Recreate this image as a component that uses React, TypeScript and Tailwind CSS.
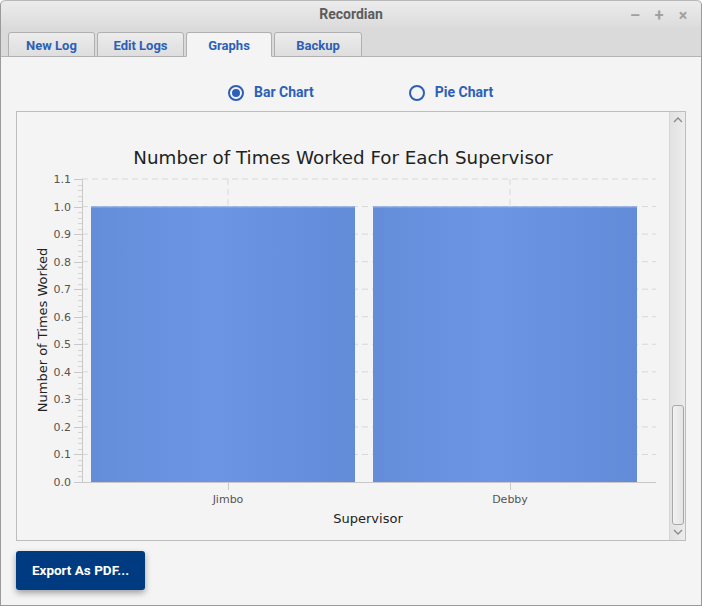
export default function App() {
  const ticks = [0, 0.1, 0.2, 0.3, 0.4, 0.5, 0.6, 0.7, 0.8, 0.9, 1.0, 1.1]
  const y = (v: number) => 370 - v * (303 / 1.1)
  const minors: number[] = []
  for (let i = 0; i < 55; i++) if (i % 5 !== 0) minors.push(i * 0.02)

  const tabs = ['New Log', 'Edit Logs', 'Graphs', 'Backup']
  const tabWidths = ['w-[87px]', 'w-[87px]', 'w-[86px]', 'w-[88px]']

  return (
    <div className="w-[702px] h-[606px] flex flex-col bg-[#f4f4f4] border border-t-0 border-[#9a9a9a] rounded-t-[5px] overflow-hidden" style={{ fontFamily: 'Roboto, "Liberation Sans", sans-serif' }}>
      {/* title bar */}
      <div className="h-[27px] relative flex items-center justify-center bg-gradient-to-b from-[#ececec] to-[#dcdcdc] border-t border-[#b8b8b8] rounded-t-[5px]">
        <span className="text-[14px] font-bold text-[#5c5c5c]">Recordian</span>
        <div className="absolute right-[12px] top-[3px] flex items-center gap-[12px] text-[#a0a0a0] text-[16px] font-bold">
          <span className="w-[12px] text-center">–</span>
          <span className="w-[12px] text-center">+</span>
          <span className="w-[12px] text-center">×</span>
        </div>
      </div>

      {/* tab strip */}
      <div className="h-[30px] bg-[#dadada] flex items-end pl-[7px] gap-[2px] border-b border-[#b4b4b4]">
        {tabs.map((t, i) => (
          <div
            key={t}
            className={`${tabWidths[i]} h-[25px] -mb-px flex items-center justify-center pt-[2px] text-[13px] font-bold text-[#2d5fb7] border border-[#b0b0b0] rounded-t-[3px] ${
              t === 'Graphs' ? 'bg-[#f4f4f4] border-b-[#f4f4f4]' : 'bg-gradient-to-b from-[#ececec] to-[#dedede]'
            }`}
          >
            {t}
          </div>
        ))}
      </div>

      {/* content */}
      <div className="flex-1 flex flex-col px-[15px]">
        <div className="h-[54px] flex items-center pl-[212px] gap-[95px] pt-[17px]">
          <div className="flex items-center gap-[10px]">
            <span className="w-[16px] h-[16px] rounded-full border-2 border-[#2d5fb7] flex items-center justify-center">
              <span className="w-[8px] h-[8px] rounded-full bg-[#2d5fb7]" />
            </span>
            <span className="text-[14px] font-bold text-[#2d5fb7]">Bar Chart</span>
          </div>
          <div className="flex items-center gap-[10px]">
            <span className="w-[16px] h-[16px] rounded-full border-2 border-[#2d5fb7]" />
            <span className="text-[14px] font-bold text-[#2d5fb7]">Pie Chart</span>
          </div>
        </div>

        {/* scroll pane */}
        <div className="h-[430px] flex border border-[#bdbdbd] bg-[#f4f4f4]">
          <div className="flex-1">
            <svg width="651" height="428" style={{ fontFamily: '"DejaVu Sans", sans-serif' }}>
              <defs>
                <linearGradient id="bar" x1="0" x2="1" y1="0" y2="0">
                  <stop offset="0" stopColor="#648dd9" />
                  <stop offset="0.45" stopColor="#6c96e4" />
                  <stop offset="1" stopColor="#628bd8" />
                </linearGradient>
              </defs>
              <text x="326" y="52" textAnchor="middle" fontSize="18.3" fill="#222">
                Number of Times Worked For Each Supervisor
              </text>

              {/* gridlines */}
              {ticks.slice(1).map((v) => (
                <line key={v} x1="65" x2="639" y1={y(v)} y2={y(v)} stroke="#d8d8d8" strokeDasharray="6 4" />
              ))}
              <line x1="211" x2="211" y1="67" y2="370" stroke="#d8d8d8" strokeDasharray="6 4" />
              <line x1="493" x2="493" y1="67" y2="370" stroke="#d8d8d8" strokeDasharray="6 4" />

              {/* bars */}
              <rect x="74" y={y(1)} width="264" height={370 - y(1)} fill="url(#bar)" />
              <rect x="356" y={y(1)} width="264" height={370 - y(1)} fill="url(#bar)" />
              <line x1="74" x2="338" y1={y(1) + 0.5} y2={y(1) + 0.5} stroke="#8eaee9" />
              <line x1="356" x2="620" y1={y(1) + 0.5} y2={y(1) + 0.5} stroke="#8eaee9" />

              {/* y axis */}
              <line x1="65.5" x2="65.5" y1="67" y2="370" stroke="#c8c8c8" />
              {ticks.map((v) => (
                <g key={v}>
                  <line x1="57" x2="65" y1={Math.round(y(v)) + 0.5} y2={Math.round(y(v)) + 0.5} stroke="#c8c8c8" />
                  <text x="54" y={y(v) + 4} textAnchor="end" fontSize="11" fill="#555">
                    {v.toFixed(1)}
                  </text>
                </g>
              ))}
              {minors.map((v) => (
                <line key={v} x1="61" x2="65" y1={Math.round(y(v)) + 0.5} y2={Math.round(y(v)) + 0.5} stroke="#d4d4d4" />
              ))}
              <text transform="translate(30 218) rotate(-90)" textAnchor="middle" fontSize="13" fill="#222">
                Number of Times Worked
              </text>

              {/* x axis */}
              <line x1="65" x2="639" y1="370.5" y2="370.5" stroke="#c8c8c8" />
              <line x1="211.5" x2="211.5" y1="370" y2="378" stroke="#c8c8c8" />
              <line x1="493.5" x2="493.5" y1="370" y2="378" stroke="#c8c8c8" />
              <text x="211" y="391" textAnchor="middle" fontSize="11" fill="#555">Jimbo</text>
              <text x="493" y="391" textAnchor="middle" fontSize="11" fill="#555">Debby</text>
              <text x="351" y="411" textAnchor="middle" fontSize="13" fill="#222">Supervisor</text>
            </svg>
          </div>
          {/* scrollbar */}
          <div className="w-[16px] flex flex-col items-center bg-gradient-to-r from-[#e2e2e2] to-[#ececec] border-l border-[#d6d6d6]">
            <svg width="12" height="12" className="mt-[2px]">
              <path d="M2 8 L6 4 L10 8" fill="none" stroke="#8a8a8a" strokeWidth="1.3" />
            </svg>
            <div className="flex-1" />
            <div className="w-[12px] h-[120px] rounded-[3px] border border-[#a8a8a8] bg-gradient-to-r from-[#f2f2f2] to-[#e4e4e4]" />
            <svg width="12" height="12" className="mb-[2px] mt-[1px]">
              <path d="M2 4 L6 8 L10 4" fill="none" stroke="#8a8a8a" strokeWidth="1.3" />
            </svg>
          </div>
        </div>

        <div className="pt-[10px]">
          <button className="w-[129px] h-[39px] bg-[#003a80] rounded-[3px] text-white text-[13.5px] font-bold shadow-[0_3px_6px_rgba(0,0,0,0.35)]">
            Export As PDF...
          </button>
        </div>
      </div>
    </div>
  )
}
